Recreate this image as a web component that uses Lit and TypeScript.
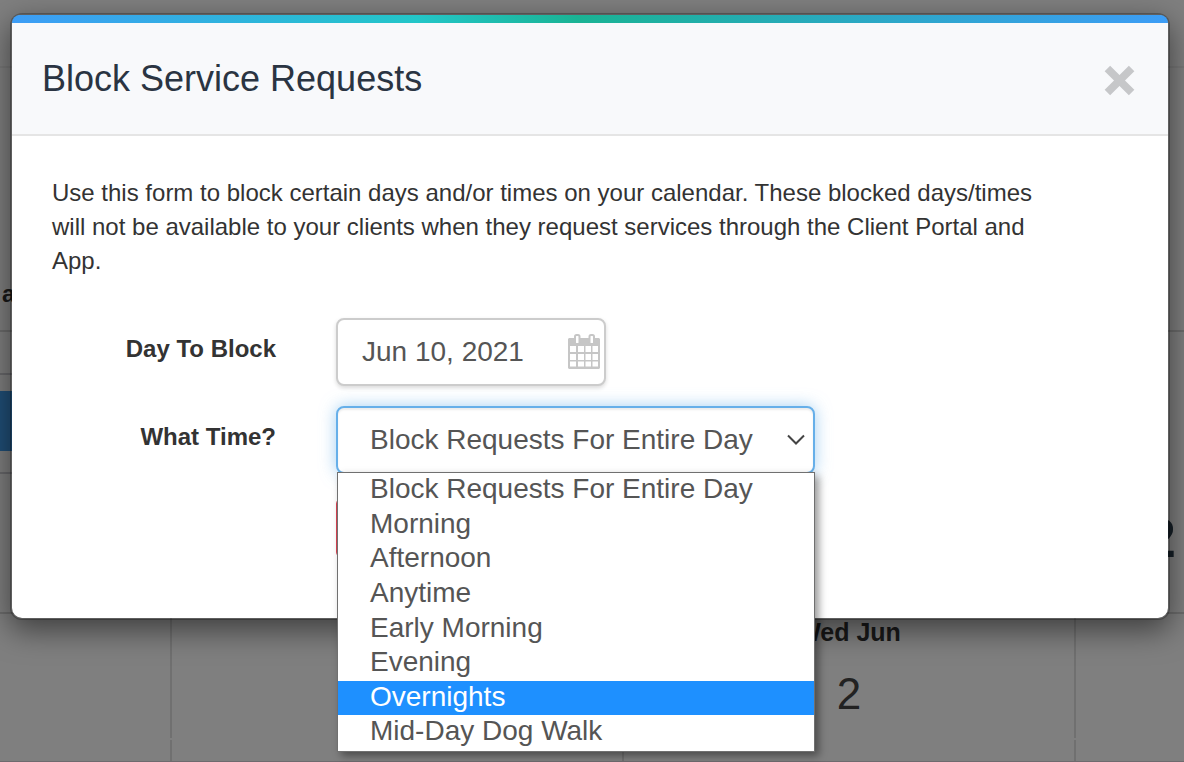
import { LitElement, html, css } from "lit";
import { customElement, state } from "lit/decorators.js";
import { classMap } from "lit/directives/class-map.js";

@customElement("calendar-page")
class CalendarPage extends LitElement {
  static styles = css`
    :host { display: flex; flex-direction: column; min-height: 100vh; background: #fff; color: #333; line-height: 32px; }
    .bar { height: 66px; border-bottom: 2px solid #f0f0f0; }
    .heading { height: 262px; border-bottom: 2px solid #d8d8d8; display: flex; align-items: flex-end; }
    .heading b { padding: 0 2px 20px; }
    .tools { display: grid; grid-template-columns: 1fr auto; height: 280px; border-bottom: 2px solid #d8d8d8; }
    .side { display: flex; flex-direction: column; width: 50%; }
    .rule { height: 41px; border-bottom: 2px solid #d0d0d6; }
    .active { height: 60px; margin: 16px 0 21px; background: #409fee; }
    .rest { border-top: 2px solid #d0d0d6; flex: 1; }
    .stat { display: flex; align-items: flex-end; padding: 0 8px 46px 0; font-weight: 700; font-size: 56px; line-height: 56px; color: #2f4050; }
    .days { flex: 1; display: grid; grid-template-columns: 172fr 452fr 452fr 108fr; grid-template-rows: 124px 1fr; row-gap: 2px; border-bottom: 1px solid #ddd5dd; }
    .cell { border-right: 2px solid #e0e0e0; text-align: center; }
    .cell:nth-child(4n) { border-right: 0; }
    .name { font-weight: 700; font-size: 25px; padding-top: 2px; }
    .date { font-size: 44px; line-height: 56px; padding-top: 18px; color: #444; }
  `;
  render() {
    return html`
      <div class="bar"></div>
      <div class="heading"><b>a</b></div>
      <div class="tools">
        <div class="side">
          <div class="rule"></div>
          <div class="active"></div>
          <div class="rest"></div>
        </div>
        <div class="stat">2</div>
      </div>
      <div class="days">
        <div class="cell"></div>
        <div class="cell"></div>
        <div class="cell">
          <div class="name">Wed Jun</div>
          <div class="date">2</div>
        </div>
        <div class="cell"></div>
        <div class="cell"></div>
        <div class="cell"></div>
        <div class="cell"></div>
        <div class="cell"></div>
      </div>
    `;
  }
}

@customElement("app-root")
class AppRoot extends LitElement {
  static styles = css`
    :host { display: block; position: relative; min-height: 100vh; overflow: hidden; font: 24px/34px "Liberation Sans", Arial, sans-serif; color: #333; }
    .backdrop { position: absolute; inset: 0; background: rgba(0, 0, 0, 0.5); padding: 13px 14px 0 10px; }
    .modal { background: #fff; background-clip: padding-box; border: 2px solid rgba(0, 0, 0, 0.25); border-radius: 12px; box-shadow: 0 10px 30px rgba(0, 0, 0, 0.5); }
    .stripe { height: 8px; border-radius: 10px 10px 0 0; background: linear-gradient(to right, #3d9df6, #23c6c8 35%, #1ab394 49%, #3d9df6); }
    header { display: flex; justify-content: space-between; align-items: center; height: 111px; padding: 0 33px 0 30px; background: #f8f9fb; border-bottom: 2px solid #e5e5e5; }
    h1 { margin: 0; font-size: 36px; line-height: 40px; font-weight: 400; color: #2a3442; }
    .close { border: 0; padding: 0; margin: 4px 0 0; background: none; display: flex; }
    .body { padding: 40px 40px 60px; }
    p { margin: 0 0 40px; max-width: 1000px; }
    form { display: grid; grid-template-columns: 224px 1fr; column-gap: 60px; row-gap: 20px; }
    .label { font-weight: 700; text-align: right; padding-top: 14px; }
    .date { position: relative; width: 270px; }
    .date input { width: 100%; height: 68px; box-sizing: border-box; font: inherit; font-size: 28px; color: #555; padding: 0 24px; border: 2px solid #ccc; border-radius: 8px; background: #fff; box-shadow: 0 2px 4px rgba(0, 0, 0, 0.15); display: block; }
    .icon { position: absolute; right: 6px; top: 16px; }
    .time { position: relative; width: 479px; }
    select {
      appearance: none; display: block; width: 100%; height: 68px; box-sizing: border-box;
      font: inherit; font-size: 28px; color: #555; padding: 0 32px; background: #fff;
      border: 2px solid #66afe9; border-radius: 8px; outline: 0;
      box-shadow: 0 0 16px rgba(102, 175, 233, 0.6), inset 0 2px 2px rgba(0, 0, 0, 0.075);
    }
    .arrow { position: absolute; right: 10px; top: 28px; pointer-events: none; }
    .menu {
      position: absolute; left: 1px; right: 0; top: 66px; z-index: 2; height: 280px; box-sizing: border-box;
      margin: 0; padding: 0 0 1px; list-style: none; background: #fff; border: 1px solid #707070;
      box-shadow: 4px 4px 8px rgba(0, 0, 0, 0.4);
      display: grid; grid-auto-rows: 1fr; font-size: 28px; line-height: 32px; color: #555;
    }
    .option { padding: 0 32px; }
    .active { background: #1e90ff; color: #fff; }
    .cancel { grid-column: 2; justify-self: start; width: 160px; height: 60px; margin: 4px 0 0; background: #ed5565; border: 2px solid #da4453; border-radius: 6px; }
  `;

  @state() active = "Overnights";
  @state() value = "Block Requests For Entire Day";
  options = ["Block Requests For Entire Day", "Morning", "Afternoon", "Anytime", "Early Morning", "Evening", "Overnights", "Mid-Day Dog Walk"];

  render() {
    return html`
      <calendar-page aria-hidden="true"></calendar-page>
      <div class="backdrop">
        <div class="modal" role="dialog" aria-labelledby="title">
          <div class="stripe"></div>
          <header>
            <h1 id="title">Block Service Requests</h1>
            <button class="close" aria-label="Close">
              <svg width="31" height="31" viewBox="0 0 32 32" fill="none" stroke="#c6c7c9" stroke-width="8">
                <path d="M3.5 3.5 28.5 28.5M28.5 3.5 3.5 28.5" />
              </svg>
            </button>
          </header>
          <div class="body">
            <p>Use this form to block certain days and/or times on your calendar. These blocked days/times will not be available to your clients when they request services through the Client Portal and App.</p>
            <form>
              <label class="label" for="day">Day To Block</label>
              <div class="date">
                <input id="day" type="text" value="Jun 10, 2021" />
                <svg class="icon" width="32" height="35" viewBox="0 0 32 35" aria-hidden="true">
                  <path fill="#c6c6c6" d="M1 4H31L32 5V34L31 35H1L0 34V5Z" />
                  <path fill="#fff" d="M2 12h6v6H2zM10 12h6v6h-6zM17.500 12h5.500v6h-5.500zM24.500 12h5.500v6h-5.500zM2 20h6v6H2zM10 20h6v6h-6zM17.500 20h5.500v6h-5.500zM24.500 20h5.500v6h-5.500zM2 27.500h6v5H2zM10 27.500h6v5h-6zM17.500 27.500h5.500v5h-5.500zM24.500 27.500h5.500v5h-5.500z" />
                  <rect x="7" y="1" width="4.500" height="9" rx="1.500" fill="#fff" stroke="#c6c6c6" stroke-width="2" />
                  <rect x="21.500" y="1" width="4.500" height="9" rx="1.500" fill="#fff" stroke="#c6c6c6" stroke-width="2" />
                </svg>
              </div>
              <label class="label" for="time">What Time?</label>
              <div class="time">
                <select id="time" @change=${(e: Event) => (this.value = (e.target as HTMLSelectElement).value)}>
                  ${this.options.map((o) => html`<option ?selected=${o === this.value}>${o}</option>`)}
                </select>
                <svg class="arrow" width="18" height="12" viewBox="0 0 18 12" fill="none" stroke="#444" stroke-width="2" aria-hidden="true">
                  <path d="M1 1.500 9 9.500 17 1.500" />
                </svg>
                <ul class="menu" role="listbox" aria-label="What Time?">
                  ${this.options.map(
                    (o) => html`<li
                      role="option"
                      class=${classMap({ option: true, active: o === this.active })}
                      aria-selected=${o === this.value ? "true" : "false"}
                      @mouseenter=${() => (this.active = o)}
                    >${o}</li>`
                  )}
                </ul>
              </div>
              <button class="cancel" type="button" aria-label="Cancel"></button>
            </form>
          </div>
        </div>
      </div>
    `;
  }
}
